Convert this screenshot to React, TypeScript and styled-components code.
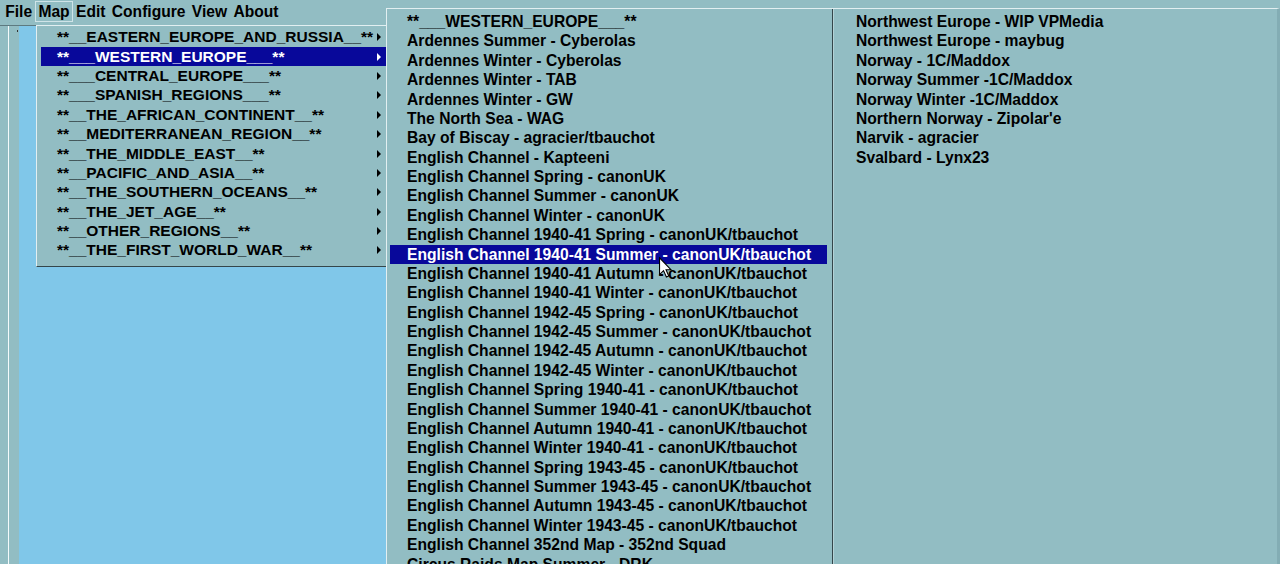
import React from "react";
import styled, { createGlobalStyle } from "styled-components";

const TEAL = "#92bdc3";
const SKY = "#80c7e9";
const NAVY = "#08089a";
const LIGHT = "#e2eff1";
const DARK = "#34464a";
const ROW = "19.375px";

const Global = createGlobalStyle`
  html, body { margin: 0; padding: 0; background: ${TEAL}; overflow: hidden; }
  body { font-family: "Liberation Sans", Arial, sans-serif; }
`;

const Screen = styled.div`
  position: relative;
  width: 1280px;
  height: 564px;
  overflow: hidden;
  background: ${TEAL};
  display: flex;
  flex-direction: column;
  font: bold 15.5px "Liberation Sans", Arial, sans-serif;
  color: #000;
`;

const MenuBar = styled.div`
  display: flex;
  align-items: flex-start;
  height: 26px;
  box-sizing: border-box;
  padding: 1px 0 0 2px;
  border-bottom: 1px solid #5d7a80;
  font-size: 15.6px;
`;

const BarItem = styled.div<{ $active?: boolean }>`
  height: 21px;
  line-height: 19px;
  box-sizing: border-box;
  padding: 0 2.2px;
  border: 1px solid ${(p) => (p.$active ? "#cfe4e8" : "transparent")};
  white-space: nowrap;
`;

const Workspace = styled.div`
  flex: 1;
  display: flex;
`;

const Gutter = styled.div<{ $w: number }>`
  width: ${(p) => p.$w}px;
  background: ${TEAL};
`;

const WhiteRule = styled.div`
  width: 1px;
  background: #f4fafb;
`;

const Desk = styled.div`
  flex: 1;
  background: ${SKY};
`;

const Tick = styled.div`
  position: absolute;
  left: 17px;
  top: 30px;
  width: 1px;
  height: 2px;
  background: #333;
`;

const RegionMenu = styled.div`
  position: absolute;
  left: 36px;
  top: 25px;
  width: 350px;
  height: 242px;
  box-sizing: border-box;
  background: ${TEAL};
  border-top: 1px solid ${LIGHT};
  border-left: 1px solid ${LIGHT};
  border-bottom: 1px solid ${DARK};
  padding: 1.6px 0 0 4px;
`;

const Row = styled.div<{ $hl?: boolean; $pl: number; $pr?: number }>`
  display: flex;
  align-items: center;
  height: ${ROW};
  padding-left: ${(p) => p.$pl}px;
  padding-right: ${(p) => p.$pr ?? 0}px;
  background: ${(p) => (p.$hl ? NAVY : "transparent")};
  color: ${(p) => (p.$hl ? "#fff" : "#000")};
  white-space: nowrap;
`;

const Label = styled.span`
  flex: 1;
`;

const MapMenu = styled.div`
  position: absolute;
  left: 386px;
  top: 8px;
  right: 0;
  height: 600px;
  box-sizing: border-box;
  background: ${TEAL};
  border-top: 1px solid ${LIGHT};
  border-left: 1px solid ${LIGHT};
  border-right: 3px solid #83adb4;
  display: flex;
  font-size: 15.65px;
`;

const Column = styled.div<{ $w?: number; $pl: number; $pr: number }>`
  ${(p) => (p.$w ? `width: ${p.$w}px;` : "flex: 1;")}
  box-sizing: border-box;
  padding: 3.4px ${(p) => p.$pr}px 0 ${(p) => p.$pl}px;
`;

const ColumnBreak = styled.div`
  width: 1px;
  background: ${DARK};
  box-shadow: 1px 0 0 #b4d2d6;
`;

const Cursor = styled.svg`
  position: absolute;
  left: 659px;
  top: 257px;
`;

const Arrow = ({ light }: { light?: boolean }) => (
  <svg width="4" height="8" viewBox="0 0 4 8">
    <path d="M0 0 L4 4 L0 8 Z" fill={light ? "#fff" : "#000"} />
  </svg>
);

const regions = [
  "**__EASTERN_EUROPE_AND_RUSSIA__**",
  "**___WESTERN_EUROPE___**",
  "**___CENTRAL_EUROPE___**",
  "**___SPANISH_REGIONS___**",
  "**__THE_AFRICAN_CONTINENT__**",
  "**__MEDITERRANEAN_REGION__**",
  "**__THE_MIDDLE_EAST__**",
  "**__PACIFIC_AND_ASIA__**",
  "**__THE_SOUTHERN_OCEANS__**",
  "**__THE_JET_AGE__**",
  "**__OTHER_REGIONS__**",
  "**__THE_FIRST_WORLD_WAR__**",
];

const maps1 = [
  "**___WESTERN_EUROPE___**",
  "Ardennes Summer - Cyberolas",
  "Ardennes Winter - Cyberolas",
  "Ardennes Winter - TAB",
  "Ardennes Winter - GW",
  "The North Sea - WAG",
  "Bay of Biscay - agracier/tbauchot",
  "English Channel - Kapteeni",
  "English Channel Spring - canonUK",
  "English Channel Summer - canonUK",
  "English Channel Winter - canonUK",
  "English Channel 1940-41 Spring - canonUK/tbauchot",
  "English Channel 1940-41 Summer - canonUK/tbauchot",
  "English Channel 1940-41 Autumn - canonUK/tbauchot",
  "English Channel 1940-41 Winter - canonUK/tbauchot",
  "English Channel 1942-45 Spring - canonUK/tbauchot",
  "English Channel 1942-45 Summer - canonUK/tbauchot",
  "English Channel 1942-45 Autumn - canonUK/tbauchot",
  "English Channel 1942-45 Winter - canonUK/tbauchot",
  "English Channel Spring 1940-41 - canonUK/tbauchot",
  "English Channel Summer 1940-41 - canonUK/tbauchot",
  "English Channel Autumn 1940-41 - canonUK/tbauchot",
  "English Channel Winter 1940-41 - canonUK/tbauchot",
  "English Channel Spring 1943-45 - canonUK/tbauchot",
  "English Channel Summer 1943-45 - canonUK/tbauchot",
  "English Channel Autumn 1943-45 - canonUK/tbauchot",
  "English Channel Winter 1943-45 - canonUK/tbauchot",
  "English Channel 352nd Map - 352nd Squad",
  "Circus Raids Map Summer - DRK",
];

const maps2 = [
  "Northwest Europe - WIP VPMedia",
  "Northwest Europe - maybug",
  "Norway - 1C/Maddox",
  "Norway Summer -1C/Maddox",
  "Norway Winter -1C/Maddox",
  "Northern Norway - Zipolar'e",
  "Narvik - agracier",
  "Svalbard - Lynx23",
];

export default function App() {
  return (
    <>
      <Global />
      <Screen>
        <MenuBar>
          <BarItem>File</BarItem>
          <BarItem $active>Map</BarItem>
          <BarItem>Edit</BarItem>
          <BarItem>Configure</BarItem>
          <BarItem>View</BarItem>
          <BarItem>About</BarItem>
        </MenuBar>
        <Workspace>
          <Gutter $w={8} />
          <WhiteRule />
          <Gutter $w={10} />
          <Desk />
        </Workspace>
        <Tick />

        <RegionMenu>
          {regions.map((r, i) => (
            <Row key={r} $pl={16} $pr={5} $hl={i === 1}>
              <Label>{r}</Label>
              <Arrow light={i === 1} />
            </Row>
          ))}
        </RegionMenu>

        <MapMenu>
          <Column $w={445} $pl={3} $pr={5}>
            {maps1.map((m, i) => (
              <Row key={m} $pl={17} $hl={i === 12}>
                {m}
              </Row>
            ))}
          </Column>
          <ColumnBreak />
          <Column $pl={4} $pr={4}>
            {maps2.map((m) => (
              <Row key={m} $pl={19}>
                {m}
              </Row>
            ))}
          </Column>
        </MapMenu>

        <Cursor width="13" height="21" viewBox="0 0 12 19">
          <path
            d="M0.5 0.5 L0.5 16 L4.2 12.4 L6.8 18.3 L9 17.3 L6.5 11.6 L11.2 11.6 Z"
            fill="#fff"
            stroke="#000"
            strokeWidth="1"
            strokeLinejoin="miter"
          />
        </Cursor>
      </Screen>
    </>
  );
}
